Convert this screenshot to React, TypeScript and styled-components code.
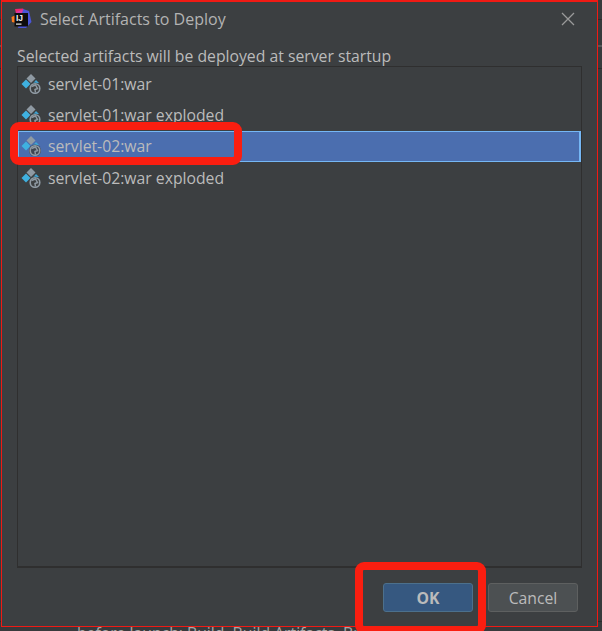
import React from "react";
import styled, { createGlobalStyle } from "styled-components";

const Global = createGlobalStyle`
  html, body { margin: 0; padding: 0; background: #333537; }
  * { box-sizing: border-box; }
`;

const Screen = styled.div`
  position: relative;
  width: 602px;
  height: 631px;
  overflow: hidden;
  background:
    linear-gradient(#2b2b2b, #2b2b2b) 0 19px / 100% 1px no-repeat,
    linear-gradient(#56585a, #56585a) 0 45px / 100% 2px no-repeat,
    linear-gradient(#2b2b2b, #2b2b2b) 0 68px / 100% 1px no-repeat,
    linear-gradient(#2b2b2b, #2b2b2b) 0 621px / 100% 1px no-repeat,
    #383a3c;
  font-family: "Open Sans", "Noto Sans", sans-serif;
  color: #bbbbbb;
`;

const Dialog = styled.div`
  position: relative;
  width: 597px;
  height: 627px;
  margin-left: 1px;
  border: 1px solid #f01a14;
  border-top-width: 2px;
  background: #3c3f41;
  display: flex;
  flex-direction: column;
  padding: 0 15px;
`;

const TitleBar = styled.div`
  height: 33px;
  flex: none;
  display: flex;
  align-items: center;
  gap: 8px;
  margin-left: -6px;
`;

const Title = styled.span`
  flex: 1;
  font-size: 16px;
  color: #b3b3b3;
`;

const CloseSlot = styled.span`
  display: flex;
  margin-right: 7px;
`;

const Hint = styled.div`
  height: 31px;
  flex: none;
  font-size: 15.75px;
  line-height: 42px;
  color: #bbbbbb;
`;

const List = styled.div`
  width: 565px;
  height: 502px;
  flex: none;
  border: 1px solid #2f2f2f;
  border-bottom-width: 2px;
  padding: 1px 0 0;
`;

const Row = styled.div<{ $selected?: boolean }>`
  height: 31.33px;
  display: flex;
  align-items: center;
  gap: 6px;
  padding-left: 2px;
  font-size: 15.75px;
  color: #bbbbbb;
  background: ${(p) => (p.$selected ? "#4b6eaf" : "transparent")};
  border: 1px solid ${(p) => (p.$selected ? "#75b7f5" : "transparent")};
  border-right-width: 2px;
`;

const Footer = styled.div`
  display: flex;
  justify-content: flex-end;
  gap: 15px;
  padding: 15px 4px 0 0;
`;

const Button = styled.div<{ $primary?: boolean }>`
  width: 90px;
  height: 29px;
  border-radius: 3px;
  display: flex;
  align-items: center;
  justify-content: center;
  font-size: 15.75px;
  font-weight: ${(p) => (p.$primary ? 700 : 400)};
  color: #bbbbbb;
  background: ${(p) => (p.$primary ? "#365880" : "#4c5052")};
  border: 1px solid ${(p) => (p.$primary ? "#4c708c" : "#5e6060")};
`;

const Callout = styled.div<{ $x: number; $y: number; $w: number; $h: number }>`
  position: absolute;
  left: ${(p) => p.$x}px;
  top: ${(p) => p.$y}px;
  width: ${(p) => p.$w}px;
  height: ${(p) => p.$h}px;
  border: 8px solid #fa1e10;
  border-radius: 9px;
`;

const Behind = styled.div`
  position: absolute;
  left: 56px;
  top: 623px;
  font-size: 15.75px;
  line-height: 20px;
  color: #a9a9a9;
  white-space: nowrap;
`;

const Bullet = styled.span`
  margin-right: 15px;
`;

const AppLogo = () => (
  <svg width="21" height="21" viewBox="0 0 21 21">
    <path d="M4 1 L12 0.5 L15 4 L6 10 Z" fill="#f0266b" />
    <path d="M0.5 9 L5 7 L5 15 L1 14 Z" fill="#fb7a1c" />
    <path d="M12 1 L18 3 L20.5 14 L15 20 L7 20 Z" fill="#4a55d8" />
    <path d="M5 4 L12 1.5 L9 10 Z" fill="#d63aa8" />
    <rect x="3.5" y="5" width="13.5" height="13.5" fill="#0d0d0d" />
    <rect x="5" y="15.5" width="5.5" height="1.2" fill="#e8e8e8" />
    <text x="5" y="13" fontFamily="Liberation Sans, sans-serif" fontWeight="700" fontSize="8.5" fill="#ededed">
      IJ
    </text>
  </svg>
);

const ArtifactIcon = () => (
  <svg width="21" height="20" viewBox="0 0 21 20">
    <path d="M10 0 L14.5 4.5 L10 9 L5.5 4.5 Z" fill="#8f9aa3" />
    <path d="M5 5.5 L9.5 10 L5 14.5 L0.5 10 Z" fill="#3fb1e0" />
    <path d="M15 6 L18 9 L11 10.5 Z" fill="#3fa6d6" />
    <circle cx="14" cy="14.5" r="6" fill="#3c3f41" fillOpacity="0.85" />
    <circle cx="14" cy="14.5" r="4.8" fill="none" stroke="#8f9aa3" strokeWidth="1.6" />
    <path d="M10.5 12.5 L14.5 11 L16.5 14.5 L14 15.5 L14.5 18.5" stroke="#8f9aa3" strokeWidth="1.5" fill="none" />
  </svg>
);

const CloseIcon = () => (
  <svg width="14" height="14" viewBox="0 0 14 14">
    <path d="M1 1 L13 13 M13 1 L1 13" stroke="#9a9a9a" strokeWidth="1.3" />
  </svg>
);

const rows = ["servlet-01:war", "servlet-01:war exploded", "servlet-02:war", "servlet-02:war exploded"];

export default function App() {
  return (
    <Screen>
      <Global />
      <Behind>
        <Bullet>•</Bullet>before launch: Build, Build Artifacts, Br
      </Behind>
      <Dialog>
        <TitleBar>
          <AppLogo />
          <Title>Select Artifacts to Deploy</Title>
          <CloseSlot>
            <CloseIcon />
          </CloseSlot>
        </TitleBar>
        <Hint>Selected artifacts will be deployed at server startup</Hint>
        <List>
          {rows.map((r, i) => (
            <Row key={r} $selected={i === 2}>
              <ArtifactIcon />
              {r}
            </Row>
          ))}
        </List>
        <Footer>
          <Button $primary>OK</Button>
          <Button>Cancel</Button>
        </Footer>
      </Dialog>
      <Callout $x={10} $y={122} $w={232} $h={43} />
      <Callout $x={355} $y={562} $w={131} $h={72} />
    </Screen>
  );
}
